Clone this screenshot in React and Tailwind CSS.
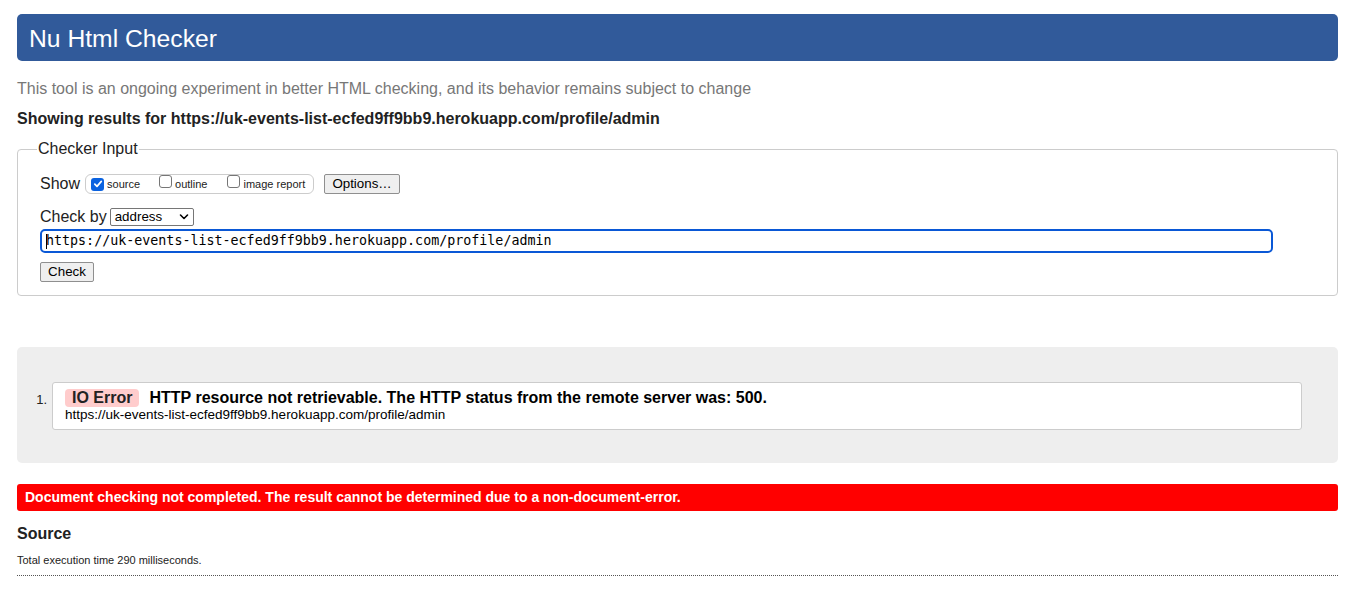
import React from "react";

const sans = { fontFamily: '"Liberation Sans", Arial, Helvetica, sans-serif' };

function Check({ checked }) {
  return checked ? (
    <span className="inline-flex h-[13px] w-[13px] items-center justify-center rounded-[3px] bg-[#0a62e0]">
      <svg width="10" height="10" viewBox="0 0 10 10">
        <path d="M1.8 5.2 L4 7.4 L8.3 2.4" fill="none" stroke="white" strokeWidth="1.7" strokeLinecap="round" strokeLinejoin="round" />
      </svg>
    </span>
  ) : (
    <span className="inline-block h-[13px] w-[13px] rounded-[3px] border border-[#767676] bg-white" />
  );
}

export default function App() {
  return (
    <div className="min-h-[602px] bg-white pl-[17px] pr-[23px] pt-[14px] text-[#222]" style={sans}>
      <div className="flex h-[47px] items-center rounded-[5px] bg-[#315a9a] pl-[12px] pt-[3px]">
        <h1 className="text-[24.7px] leading-none text-white">Nu Html Checker</h1>
      </div>

      <p className="mt-[19px] text-[16px] leading-[18px] text-[#777]">
        This tool is an ongoing experiment in better HTML checking, and its behavior remains subject to change
      </p>
      <p className="mt-[12px] text-[16px] font-bold leading-[18px] text-[#222]">
        Showing results for https://uk-events-list-ecfed9ff9bb9.herokuapp.com/profile/admin
      </p>

      <fieldset className="mt-[12px] rounded-[4px] border border-[#cccccc] pl-[22px] pb-[13px]">
        <legend className="-ml-[3px] px-[1px] text-[16px] leading-[18px] text-[#222]">Checker Input</legend>
        <div className="mt-[16px] flex items-center">
          <span className="text-[16px] leading-[18px]">Show</span>
          <div className="ml-[5px] flex h-[20px] w-[229px] items-center rounded-[6px] border border-[#cccccc] pl-[5px] text-[11px]">
            <Check checked />
            <span className="ml-[3px]">source</span>
            <span className="ml-[19px]"><Check /></span>
            <span className="ml-[3px]">outline</span>
            <span className="ml-[20px]"><Check /></span>
            <span className="ml-[3px]">image report</span>
          </div>
          <button className="ml-[10px] flex h-[20px] w-[76px] items-center justify-center rounded-[2px] border border-[#8f8f8f] bg-[#efefef] text-[13.33px] text-black">
            Options…
          </button>
        </div>
        <div className="mt-[14px] flex items-center">
          <span className="text-[16px] leading-[18px]">Check by</span>
          <div className="ml-[3px] flex h-[18px] w-[84px] items-center justify-between rounded-[2px] border border-[#767676] bg-white pl-[4px] pr-[4px] text-[13.33px] text-black">
            <span>address</span>
            <svg width="10" height="8" viewBox="0 0 10 8">
              <path d="M1.5 2 L5 5.5 L8.5 2" fill="none" stroke="black" strokeWidth="1.6" strokeLinecap="round" strokeLinejoin="round" />
            </svg>
          </div>
        </div>
        <div className="mt-[3px] flex h-[24px] w-[1233px] items-center rounded-[5px] border-2 border-[#0a58d6] pl-[4px]">
          <span className="h-[15px] w-px bg-black" />
          <span className="-ml-px text-[13.33px] text-black" style={{ fontFamily: '"DejaVu Sans Mono", "Liberation Mono", monospace' }}>
            https://uk-events-list-ecfed9ff9bb9.herokuapp.com/profile/admin
          </span>
        </div>
        <button className="mt-[9px] flex h-[20px] w-[54px] items-center justify-center rounded-[2px] border border-[#8f8f8f] bg-[#efefef] text-[13.33px] text-black">
          Check
        </button>
      </fieldset>

      <div className="mt-[51px] rounded-[5px] bg-[#eeeeee] pb-[33px] pr-[36px] pt-[35px]">
        <ol className="flex items-start">
          <span className="mt-[10px] w-[35px] pr-[5px] text-right text-[13px] leading-[16px]">1.</span>
          <li className="flex-1 rounded-[3px] border border-[#cccccc] bg-white pb-[7px] pl-[12px] pt-[6px]">
            <p className="flex items-center text-[16px] font-bold leading-[18px] text-black">
              <span className="rounded-[4px] bg-[#ffcccc] px-[7px] text-[#222]">IO Error</span>
              <span className="ml-[10px]">HTTP resource not retrievable. The HTTP status from the remote server was: 500.</span>
            </p>
            <p className="text-[13.5px] leading-[15px] text-black">https://uk-events-list-ecfed9ff9bb9.herokuapp.com/profile/admin</p>
          </li>
        </ol>
      </div>

      <div className="mt-[21px] flex h-[27px] items-center rounded-[3px] bg-[#ff0000] pl-[8px] text-[14px] font-bold text-white">
        Document checking not completed. The result cannot be determined due to a non-document-error.
      </div>

      <h2 className="mt-[13px] text-[16px] font-bold leading-[19px] text-[#222]">Source</h2>
      <p className="mt-[11px] text-[11px] leading-[13px] text-[#222]">Total execution time 290 milliseconds.</p>
      <div className="mt-[8px] border-b border-dotted border-[#555]" />
    </div>
  );
}
